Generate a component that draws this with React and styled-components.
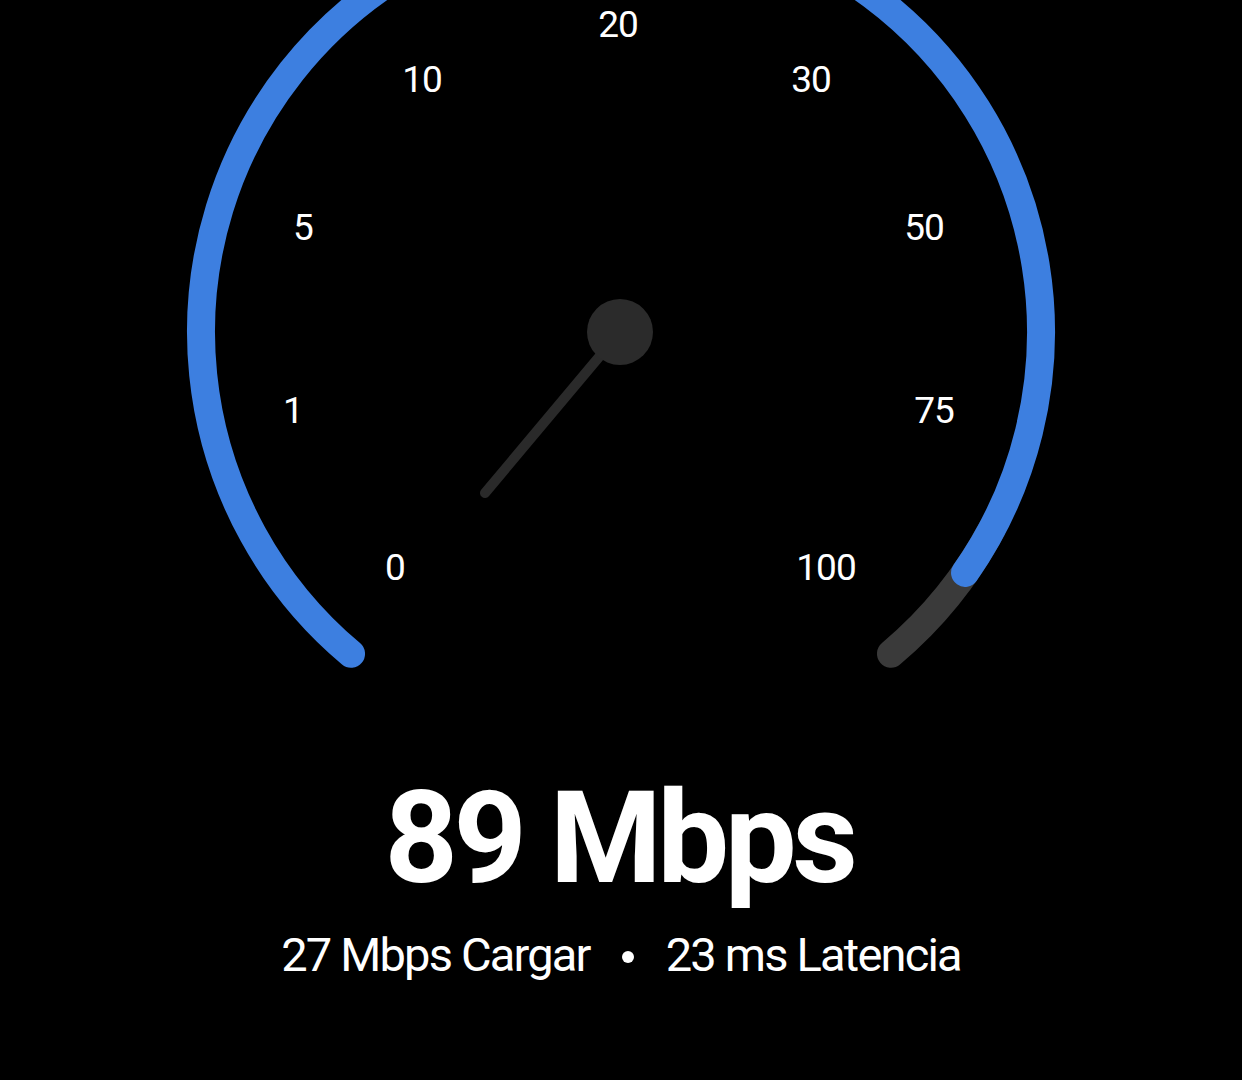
import React from 'react';
import styled, { createGlobalStyle } from 'styled-components';

const GlobalStyle = createGlobalStyle`
  html, body {
    margin: 0;
    padding: 0;
    background: #000;
  }
`;

const CX = 621;
const CY = 332;
const R = 420;

const point = (deg) => {
  const a = (deg * Math.PI) / 180;
  return [CX + R * Math.sin(a), CY - R * Math.cos(a)];
};

const arcPath = (from, to) => {
  const [x1, y1] = point(from);
  const [x2, y2] = point(to);
  const large = to - from > 180 ? 1 : 0;
  return `M ${x1} ${y1} A ${R} ${R} 0 ${large} 1 ${x2} ${y2}`;
};

const ticks = [
  { label: '0', x: 395, y: 567 },
  { label: '1', x: 293, y: 410 },
  { label: '5', x: 303, y: 227 },
  { label: '10', x: 422, y: 79 },
  { label: '20', x: 618, y: 24 },
  { label: '30', x: 811, y: 79 },
  { label: '50', x: 924, y: 227 },
  { label: '75', x: 934, y: 410 },
  { label: '100', x: 826, y: 567 },
];

function Gauge() {
  return (
    <Dial viewBox="0 0 1242 720" width="1242" height="720">
      <path d={arcPath(118, 140)} stroke="#3a3a3a" strokeWidth="28" fill="none" strokeLinecap="round" />
      <path d={arcPath(-140, 125)} stroke="#3d7fe0" strokeWidth="28" fill="none" strokeLinecap="round" />
      {ticks.map((t) => (
        <TickLabel key={t.label} x={t.x} y={t.y} textAnchor="middle" dominantBaseline="central">
          {t.label}
        </TickLabel>
      ))}
      <line x1={CX - 1} y1={CY} x2="485" y2="493" stroke="#2a2a2a" strokeWidth="10" strokeLinecap="round" />
      <circle cx={CX - 1} cy={CY} r="33" fill="#2b2b2b" />
    </Dial>
  );
}

export default function App() {
  return (
    <>
      <GlobalStyle />
      <Screen>
        <Gauge />
        <Speed>89 Mbps</Speed>
        <Details>
          <span>27 Mbps Cargar</span>
          <Dot />
          <span>23 ms Latencia</span>
        </Details>
      </Screen>
    </>
  );
}

const Screen = styled.div`
  width: 1242px;
  height: 1080px;
  background: #000;
  color: #fff;
  display: flex;
  flex-direction: column;
  align-items: center;
  overflow: hidden;
  font-family: Roboto, "Noto Sans", sans-serif;
`;

const Dial = styled.svg`
  display: block;
  flex-shrink: 0;
`;

const TickLabel = styled.text`
  fill: #fff;
  font-family: Roboto, sans-serif;
  font-size: 37px;
  letter-spacing: -1px;
`;

const Speed = styled.div`
  margin-top: 43px;
  font-size: 128px;
  font-weight: 700;
  line-height: 150px;
  letter-spacing: -4.5px;
  padding-right: 4px;
`;

const Details = styled.div`
  margin-top: 12px;
  display: flex;
  align-items: center;
  gap: 32px;
  font-size: 47px;
  line-height: 60px;
  letter-spacing: -1.8px;
`;

const Dot = styled.span`
  width: 12px;
  height: 12px;
  border-radius: 50%;
  background: #fff;
  margin-top: 4px;
`;
